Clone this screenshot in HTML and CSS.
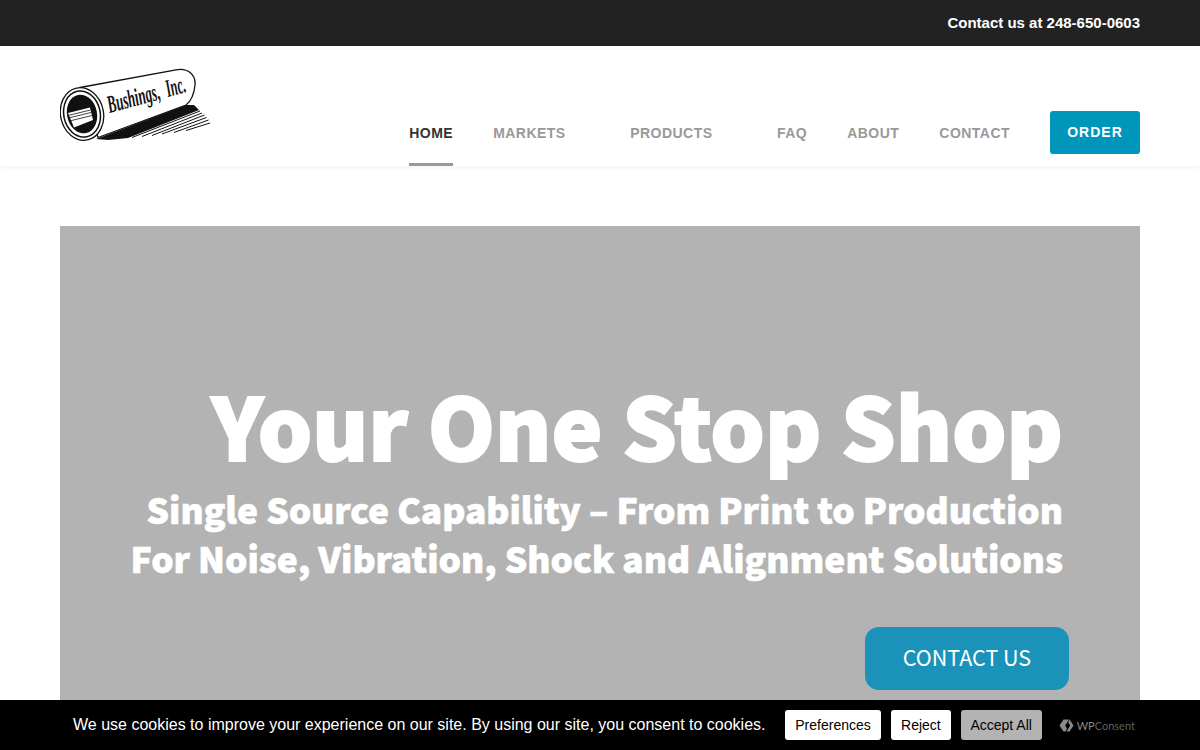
FILE: index.html
```html
<!DOCTYPE html>
<html lang="en">
<head>
  <meta charset="UTF-8" />
  <title>Bushings, Inc.</title>
  <link rel="stylesheet" href="styles.css">
</head>
<body>
  <div class="top-bar">
    <a class="top-phone" href="#">Contact us at 248-650-0603</a>
  </div>

  <header class="site-header">
    <a class="logo" href="#">
      <svg width="150" height="74" viewBox="0 0 150 74">
        <!-- shadow under the roll -->
        <path d="M36 71 L126 37 L134 37 L139 42 L68 70 L48 72 Z" fill="#111"/>
        <g stroke="#111" stroke-width="1" fill="none">
          <path d="M140 43 L72 69.5"/>
          <path d="M142 45 L82 68.5"/>
          <path d="M144.5 47 L92 67.5"/>
          <path d="M146.5 49.5 L102 66"/>
          <path d="M148.5 52 L114 64.5"/>
          <path d="M150 55 L126 62.5"/>
        </g>
        <!-- roll body -->
        <path d="M20 19.5 L116 1.8 C128 -0.5 136 7 135 17 C134 27 130 34 126 37 L38 69.5 Z" fill="#fff" stroke="#111" stroke-width="1.3"/>
        <!-- end of the roll -->
        <ellipse cx="22" cy="46" rx="21.5" ry="26.5" transform="rotate(-12 22 46)" fill="#fff" stroke="#111" stroke-width="1.3"/>
        <ellipse cx="22" cy="46" rx="19" ry="24" transform="rotate(-12 22 46)" fill="#111"/>
        <ellipse cx="22" cy="46" rx="17.5" ry="22.5" transform="rotate(-12 22 46)" fill="#fff"/>
        <ellipse cx="22" cy="46" rx="15" ry="19.5" transform="rotate(-12 22 46)" fill="#111"/>
        <path d="M8 45 L30 39.5 L33 52 L14 59.5 Z" fill="#fff"/>
        <g stroke="#111" stroke-width="0.8">
          <path d="M8 47.5 L30.5 42"/>
          <path d="M8.5 50 L31 44.5"/>
          <path d="M9.5 53 L32 47.5"/>
        </g>
        <text class="logo-text" x="49.5" y="45" transform="rotate(-15 49.5 45)" textLength="54" lengthAdjust="spacingAndGlyphs">Bushings,</text>
        <text class="logo-text" x="108" y="29" transform="rotate(-15 108 29)" textLength="20" lengthAdjust="spacingAndGlyphs">Inc.</text>
      </svg>
    </a>
    <nav class="main-nav">
      <a class="nav-link active" href="#">HOME</a>
      <a class="nav-link has-sub" href="#">MARKETS</a>
      <a class="nav-link has-sub" href="#">PRODUCTS</a>
      <a class="nav-link" href="#">FAQ</a>
      <a class="nav-link" href="#">ABOUT</a>
      <a class="nav-link" href="#">CONTACT</a>
      <a class="order-btn" href="#">ORDER</a>
    </nav>
  </header>

  <main class="page">
    <section class="hero">
      <h1 class="hero-title">Your One Stop Shop</h1>
      <p class="hero-sub">Single Source Capability – From Print to Production</p>
      <p class="hero-sub">For Noise, Vibration, Shock and Alignment Solutions</p>
      <a class="hero-btn" href="#">CONTACT US</a>
    </section>
  </main>

  <div class="cookie-bar">
    <p class="cookie-text">We use cookies to improve your experience on our site. By using our site, you consent to cookies.</p>
    <button class="cookie-btn prefs">Preferences</button>
    <button class="cookie-btn">Reject</button>
    <button class="cookie-btn accept">Accept All</button>
    <span class="wpconsent">
      <svg width="15" height="13" viewBox="0 0 15 13">
        <path d="M4.5 0.5 H10 L6.2 6.5 L8 9.5 L6.5 12.5 H4.5 L0.5 6.5 Z" fill="#8a8a8a"/>
        <path d="M10.5 12.5 H7.5 L11.2 6.5 L9.2 3.5 L10.7 0.5 L14.5 6.5 Z" fill="#8a8a8a"/>
      </svg>
      <span class="wp-strong">WP</span>Consent
    </span>
  </div>
</body>
</html>
```

FILE: styles.css
```css
html, body {
  margin: 0;
  height: 750px;
  overflow: hidden;
}

body {
  font-family: "Liberation Sans", Arial, sans-serif;
  background: #fff;
}

a {
  text-decoration: none;
}

.top-bar {
  display: flex;
  justify-content: flex-end;
  align-items: center;
  height: 46px;
  padding: 0 60px 2px;
  box-sizing: border-box;
  background: #222;
}

.top-phone {
  color: #fff;
  font-size: 15px;
  font-weight: 700;
}

.site-header {
  display: flex;
  justify-content: space-between;
  height: 120px;
  padding: 0 60px;
  background: #fff;
  box-shadow: 0 2px 6px rgba(0, 0, 0, 0.05);
  position: relative;
}

.logo {
  display: block;
  margin-top: 22px;
  height: 74px;
}

.logo-text {
  font-family: "Liberation Serif", serif;
  font-style: italic;
  font-weight: 700;
  font-size: 25px;
  fill: #111;
}

.main-nav {
  display: flex;
  align-items: flex-end;
  gap: 40px;
}

.nav-link {
  display: block;
  height: 53px;
  padding-top: 12px;
  box-sizing: border-box;
  border-bottom: 3px solid transparent;
  color: #999;
  font-size: 14px;
  font-weight: 700;
  letter-spacing: 0.47px;
  line-height: 16px;
}

.nav-link.has-sub {
  margin-right: 24.5px;
}

.nav-link.active {
  color: #333;
  border-bottom-color: #999;
}

.order-btn {
  align-self: flex-start;
  margin-top: 65px;
  width: 90px;
  height: 43px;
  line-height: 43px;
  text-align: center;
  border-radius: 3px;
  background: #0095ba;
  color: #fff;
  font-size: 14px;
  font-weight: 700;
  letter-spacing: 1px;
}

.page {
  padding: 60px 60px 0;
}

.hero {
  display: flex;
  flex-direction: column;
  align-items: flex-end;
  height: 524px;
  padding: 137px 77px 0 0;
  box-sizing: border-box;
  background: #b3b3b3;
  color: #fff;
  font-family: "Noto Sans CJK SC", "Source Sans Pro", sans-serif;
  white-space: nowrap;
}

.hero-title {
  margin: 0 0 -1px;
  font-size: 85.7px;
  font-weight: 900;
  line-height: 122px;
  -webkit-text-stroke: 2px #fff;
}

.hero-sub {
  margin: 0;
  font-size: 35.3px;
  font-weight: 900;
  line-height: 49px;
  -webkit-text-stroke: 0.7px #fff;
}

.hero-btn {
  margin: 45px -6px 0 0;
  width: 204px;
  height: 63px;
  line-height: 60px;
  text-align: center;
  border-radius: 14px;
  background: #1a92b9;
  color: #fff;
  font-size: 21.5px;
}

/* cookie notice stays on top of the page */
.cookie-bar {
  position: fixed;
  left: 0;
  right: 0;
  bottom: 0;
  display: flex;
  align-items: center;
  height: 50px;
  padding-left: 73px;
  background: #000;
}

.cookie-text {
  margin: 0 19.5px 0 0;
  color: #fff;
  font-size: 16px;
}

.cookie-btn {
  height: 30px;
  padding: 0 10px;
  margin-right: 10px;
  border: 0;
  border-radius: 3px;
  background: #fff;
  color: #000;
  font-family: "Liberation Sans", Arial, sans-serif;
  font-size: 14px;
}

.cookie-btn.prefs {
  width: 96px;
  padding: 0;
}

.cookie-btn.accept {
  width: 81px;
  padding: 0;
  background: #b3b3b3;
}

.wpconsent {
  display: flex;
  align-items: center;
  gap: 3px;
  margin-left: 7px;
  color: #5f5f5f;
  font-family: Lato, sans-serif;
  font-size: 11px;
}

.wp-strong {
  color: #8a8a8a;
  margin-right: -3px;
}
```
